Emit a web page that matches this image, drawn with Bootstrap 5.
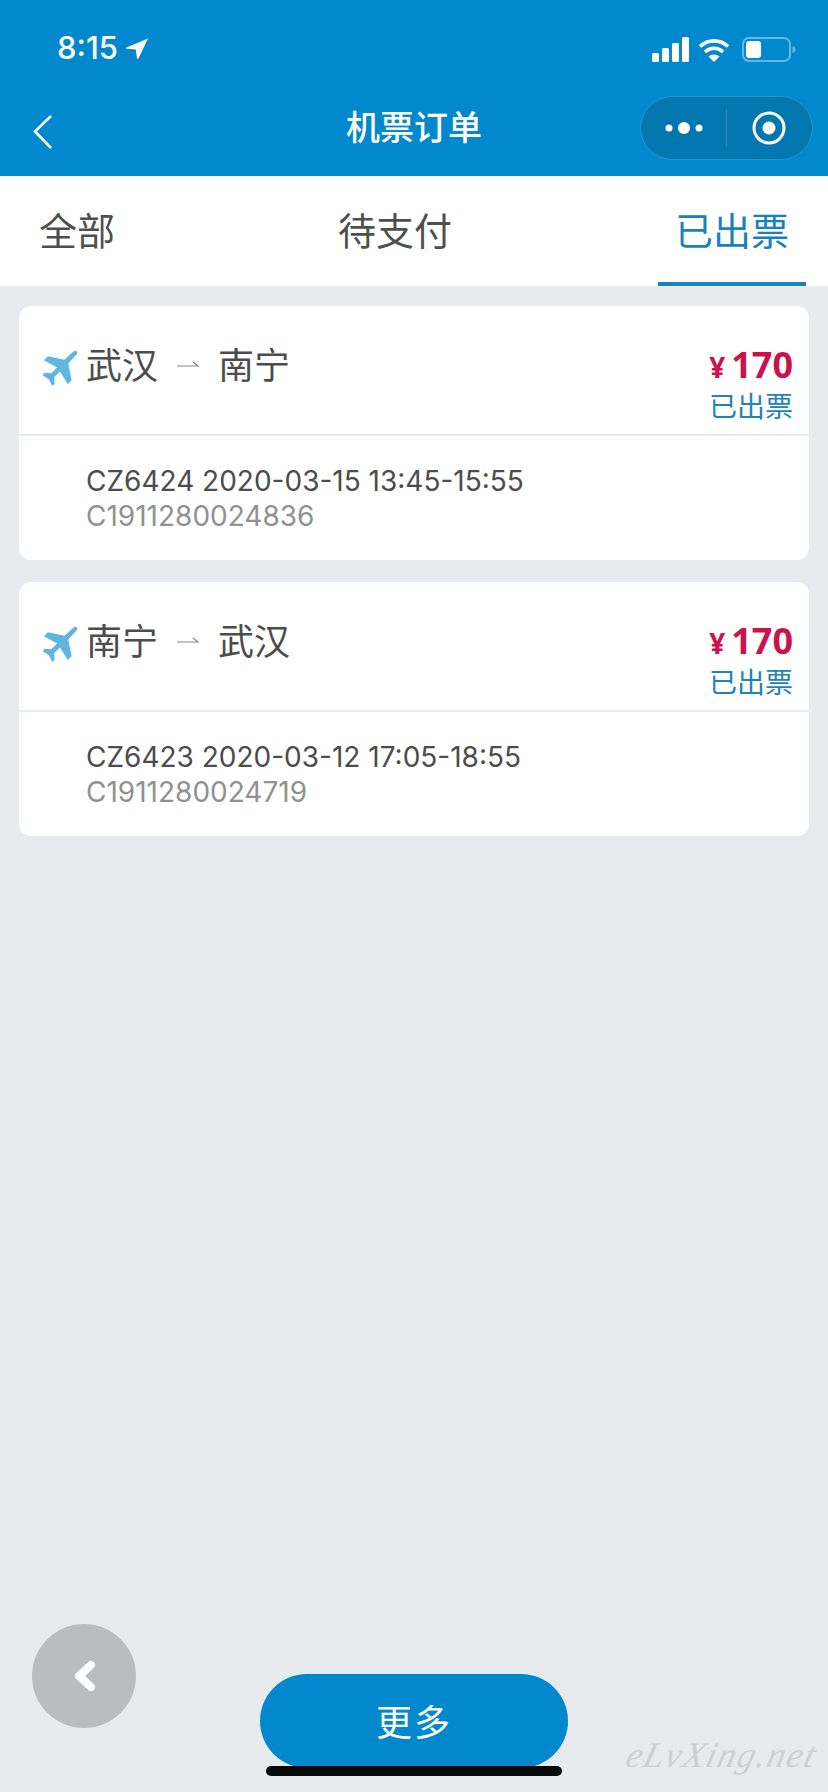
<!doctype html>
<html lang="zh-CN">
  <head>
    <meta charset="UTF-8" />
    <meta name="viewport" content="width=device-width, initial-scale=1.0" />
    <title>机票订单</title>
    <link
      href="https://cdn.jsdelivr.net/npm/bootstrap@5.3.0/dist/css/bootstrap.min.css"
      rel="stylesheet"
    />
    <style>
      html, body { height: 100%; }
      body {
        background: #e7ebee;
        font-family: Inter, "Noto Sans CJK SC", sans-serif;
        color: #4a4a4a;
        overflow: hidden;
      }
      .screen { position: relative; height: 1792px; }
      .app-head { background: #0288cc; height: 176px; color: #fff; }
      .status-row { height: 96px; padding: 30px 32px 0 57px; }
      .clock { font-size: 31px; font-weight: 500; line-height: 36px; }
      .status-icons { padding-top: 7px; }
      .title-row { height: 80px; padding-right: 15px; position: relative; }
      .back-link { margin: 18px 0 0 32px; }
      .page-title {
        position: absolute; left: 0; right: 0; top: 8px;
        text-align: center; font-size: 34px; font-weight: 500; line-height: 48px;
      }
      .capsule {
        width: 173px; height: 64px; background: #0276ae;
        border: 1px solid #2a96c8; border-radius: 32px;
      }
      .capsule-half { width: 86px; }
      .capsule-line { width: 1px; height: 38px; background: #2a92c2; }
      .tab-bar { background: #fff; height: 110px; padding: 0 22px; }
      .tab-item {
        padding: 0 17px; font-size: 38px; line-height: 110px; height: 110px; color: #4f4f4f;
      }
      .tab-on {
        width: 148px; padding: 0; text-align: center; color: #1a82bb;
        border-bottom: 4px solid #1a82bb;
      }
      .order-list { padding: 20px 19px 0; }
      .order-card { border: 0; border-radius: 12px; height: 254px; margin-bottom: 22px; }
      .order-top { height: 130px; border-bottom: 2px solid #e7ebee; padding: 0 16px 0 24px; }
      .route {
        font-size: 36px; line-height: 44px; padding-top: 38px; color: #4c4c4c;
      }
      .route-arrow { margin: 0 18px; }
      .plane { margin-right: 8px; margin-top: 5px; }
      .price-box { text-align: right; padding-top: 37px; }
      .price { color: #c9124e; font-weight: 700; font-size: 36px; line-height: 44px; font-family: "Open Sans", sans-serif; }
      .yen { font-size: 28px; margin-right: 6px; }
      .state { color: #1d84b8; font-size: 28px; line-height: 36px; }
      .order-bottom { padding: 27px 0 0 67px; }
      .flight { font-size: 28px; line-height: 36px; color: #4c4c4c; }
      .serial { font-size: 28px; line-height: 36px; color: #919191; margin-top: -1px; }
      .round-back {
        position: absolute; left: 32px; top: 1624px; width: 104px; height: 104px;
        border-radius: 50%; background: #b9bdc0;
      }
      .more-btn {
        position: absolute; left: 260px; top: 1674px; width: 308px; height: 94px;
        border-radius: 47px; background: #0288cc; color: #fff; border: 0;
        font-size: 36px; letter-spacing: 2px; padding: 4px 0 0;
      }
      .home-bar {
        position: absolute; left: 266px; top: 1766px; width: 296px; height: 10px;
        border-radius: 5px; background: #08090b;
      }
      .water-mark {
        position: absolute; right: 12px; top: 1730px;
        font-family: "Liberation Serif", serif; font-style: italic;
        font-size: 36px; letter-spacing: 1.5px; color: #cdd0d3; line-height: 50px;
        transform: skewX(-14deg);
      }
    </style>
  </head>
  <body>
    <div class="screen">
      <div class="app-head">
        <div class="status-row d-flex justify-content-between">
          <div class="d-flex align-items-start">
            <span class="clock">8:15</span>
            <svg class="status-arrow mt-2 ms-2" width="23" height="22" viewBox="0 0 23 22"><path fill="#fff" d="M22 .5 12.500 20.500c-.4.800-1.300.7-1.500-.2L9.800 11.600.8 10.800C0 10.700-.2 9.800.5 9.400z"/></svg>
          </div>
          <div class="status-icons d-flex align-items-start gap-2">
            <svg width="38" height="26" viewBox="0 0 38 26" fill="#fff">
              <rect x="0" y="16" width="7" height="9" rx="1.5"/>
              <rect x="10" y="11" width="7" height="14" rx="1.5"/>
              <rect x="20" y="6" width="7" height="19" rx="1.500"/>
              <rect x="30" y="0" width="7" height="25" rx="1.500"/>
            </svg>
            <svg width="32" height="26" viewBox="0 0 32 26">
              <path fill="none" stroke="#fff" stroke-width="3.600" d="M2 9.500C10 2 22 2 30 9.500M7 15c5.500-5 12.500-5 18 0"/>
              <path fill="#fff" d="M16 25 10.500 19.500c3-2.800 8-2.800 11 0z"/>
            </svg>
            <svg class="ms-1" width="54" height="26" viewBox="0 0 54 26">
              <rect x="1" y="1" width="47" height="23" rx="6" fill="none" stroke="#63b8e4" stroke-width="2"/>
              <rect x="4" y="4" width="15" height="17" rx="3" fill="#fff"/>
              <path d="M50.500 9c2 .6 3 2 3 3.500s-1 3-3 3.500z" fill="#63b8e4"/>
            </svg>
          </div>
        </div>
        <div class="title-row d-flex justify-content-between">
          <svg class="back-link" width="22" height="36" viewBox="0 0 22 36"><path d="M19 2 3 17.500 19 34" fill="none" stroke="#fff" stroke-width="2.600"/></svg>
          <div class="page-title">机票订单</div>
          <div class="capsule d-flex align-items-center">
            <div class="capsule-half d-flex justify-content-center align-items-center">
              <svg width="38" height="14" viewBox="0 0 38 14" fill="#fff"><circle cx="4" cy="7" r="3.500"/><circle cx="19" cy="7" r="6"/><circle cx="34" cy="7" r="3.500"/></svg>
            </div>
            <div class="capsule-line"></div>
            <div class="capsule-half d-flex justify-content-center">
              <svg width="34" height="34" viewBox="0 0 34 34"><circle cx="17" cy="17" r="15" fill="none" stroke="#fff" stroke-width="3"/><circle cx="17" cy="17" r="6.500" fill="#fff"/></svg>
            </div>
          </div>
        </div>
      </div>

      <div class="tab-bar d-flex justify-content-between">
        <div class="tab-item">全部</div>
        <div class="tab-item">待支付</div>
        <div class="tab-item tab-on">已出票</div>
      </div>

      <div class="order-list">
        <div class="card order-card">
          <div class="order-top d-flex justify-content-between">
            <div class="route d-flex align-items-start">
              <svg class="plane" width="35" height="37" viewBox="0 0 36 36"><path fill="#5fb6e0" d="M32 1c2-1 4 1 3 3L26 14l3.500 17-4 4-8-13-6 6 .5 7-2.500 2-3.500-7-6.500-4 2-2.500 7 .5 6-6L1 10.500l4-4 17 3.500z"/></svg>
              <span>武汉</span>
              <svg class="route-arrow mt-3" width="24" height="12" viewBox="0 0 24 12"><path d="M1 6h21l-5-4" fill="none" stroke="#8a8a8a" stroke-width="1.200"/></svg>
              <span>南宁</span>
            </div>
            <div class="price-box">
              <div class="price"><span class="yen">¥</span>170</div>
              <div class="state">已出票</div>
            </div>
          </div>
          <div class="order-bottom">
            <div class="flight">CZ6424 2020-03-15 13:45-15:55</div>
            <div class="serial">C1911280024836</div>
          </div>
        </div>

        <div class="card order-card">
          <div class="order-top d-flex justify-content-between">
            <div class="route d-flex align-items-start">
              <svg class="plane" width="35" height="37" viewBox="0 0 36 36"><path fill="#5fb6e0" d="M32 1c2-1 4 1 3 3L26 14l3.500 17-4 4-8-13-6 6 .5 7-2.500 2-3.500-7-6.500-4 2-2.500 7 .5 6-6L1 10.500l4-4 17 3.500z"/></svg>
              <span>南宁</span>
              <svg class="route-arrow mt-3" width="24" height="12" viewBox="0 0 24 12"><path d="M1 6h21l-5-4" fill="none" stroke="#8a8a8a" stroke-width="1.200"/></svg>
              <span>武汉</span>
            </div>
            <div class="price-box">
              <div class="price"><span class="yen">¥</span>170</div>
              <div class="state">已出票</div>
            </div>
          </div>
          <div class="order-bottom">
            <div class="flight">CZ6423 2020-03-12 17:05-18:55</div>
            <div class="serial">C1911280024719</div>
          </div>
        </div>
      </div>

      <div class="round-back d-flex align-items-center justify-content-center">
        <svg width="26" height="36" viewBox="0 0 26 36"><path d="M20 7 8 18l12 11" fill="none" stroke="#fff" stroke-width="8" stroke-linecap="round" stroke-linejoin="round"/></svg>
      </div>
      <button class="btn more-btn" type="button">更多</button>
      <div class="home-bar"></div>
      <div class="water-mark">eLvXing.net</div>
    </div>
    <script src="https://cdn.jsdelivr.net/npm/bootstrap@5.3.0/dist/js/bootstrap.bundle.min.js"></script>
  </body>
</html>
